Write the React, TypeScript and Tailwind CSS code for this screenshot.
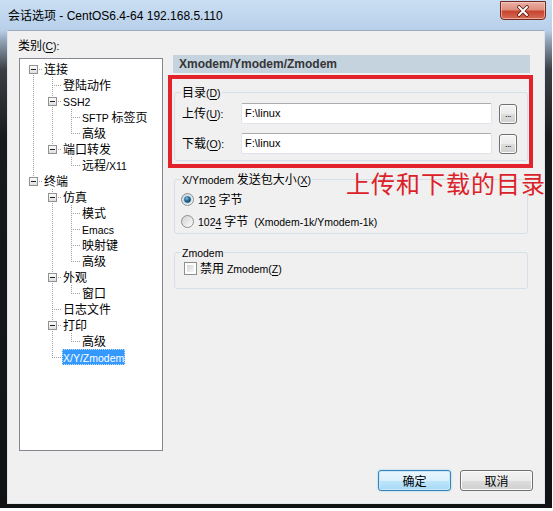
import React from "react";

const CJK_RE = /[\u2E80-\u9FFF\uFF00-\uFFEF\u3000-\u303F]/;

function Txt({ s, lat = "text-[10.5px]" }: { s: string; lat?: string }) {
  const toks: { ch: string; u: boolean }[] = [];
  for (let j = 0; j < s.length; j++) {
    if (s[j] === "&" && j + 1 < s.length) {
      toks.push({ ch: s[j + 1], u: true });
      j++;
    } else toks.push({ ch: s[j], u: false });
  }
  const runs: { t: string; c: boolean; u: boolean }[] = [];
  let cur: { t: string; c: boolean; u: boolean } | null = null;
  for (const t of toks) {
    const c = CJK_RE.test(t.ch);
    if (cur && cur.c === c && cur.u === t.u) cur.t += t.ch;
    else {
      cur = { t: t.ch, c, u: t.u };
      runs.push(cur);
    }
  }
  return (
    <>
      {runs.map((r, i) => (
        <span
          key={i}
          className={
            (r.c ? "text-[12px] [font-family:'Noto_Sans_CJK_SC',sans-serif]" : lat) +
            (r.u ? " underline underline-offset-[2px] decoration-1" : "")
          }
        >
          {r.t}
        </span>
      ))}
    </>
  );
}

type N = { l: string; c?: N[]; sel?: boolean };
const TREE: N[] = [
  {
    l: "连接",
    c: [
      { l: "登陆动作" },
      { l: "SSH2", c: [{ l: "SFTP 标签页" }, { l: "高级" }] },
      { l: "端口转发", c: [{ l: "远程/X11" }] },
    ],
  },
  {
    l: "终端",
    c: [
      { l: "仿真", c: [{ l: "模式" }, { l: "Emacs" }, { l: "映射键" }, { l: "高级" }] },
      { l: "外观", c: [{ l: "窗口" }] },
      { l: "日志文件" },
      { l: "打印", c: [{ l: "高级" }] },
      { l: "X/Y/Zmodem", sel: true },
    ],
  },
];

type Row = {
  l: string;
  depth: number;
  hasKids: boolean;
  last: boolean;
  firstRoot: boolean;
  anc: boolean[];
  sel?: boolean;
};

function flatten(nodes: N[], depth: number, anc: boolean[], out: Row[]) {
  nodes.forEach((n, i) => {
    const last = i === nodes.length - 1;
    out.push({
      l: n.l,
      depth,
      hasKids: !!n.c,
      last,
      firstRoot: depth === 0 && i === 0,
      anc,
      sel: n.sel,
    });
    if (n.c) flatten(n.c, depth + 1, [...anc, last], out);
  });
  return out;
}

const ROWS = flatten(TREE, 0, [], []);
const DOT = "#a0a0a0";

function dotsV(x: number, y0: number, y1: number, k: string) {
  const r: React.ReactNode[] = [];
  for (let y = y0; y <= y1; y += 2) r.push(<rect key={k + y} x={x} y={y} width={1} height={1} fill={DOT} />);
  return r;
}
function dotsH(y: number, x0: number, x1: number, k: string) {
  const r: React.ReactNode[] = [];
  for (let x = x0; x <= x1; x += 2) r.push(<rect key={k + x} x={x} y={y} width={1} height={1} fill={DOT} />);
  return r;
}

function AncCell({ line }: { line: boolean }) {
  return (
    <svg width={19} height={16} className="block shrink-0">
      {line && dotsV(9, 0, 15, "a")}
    </svg>
  );
}

function NodeCell({ row }: { row: Row }) {
  const up = !row.firstRoot;
  const down = !row.last;
  return (
    <svg width={19} height={16} className="block shrink-0">
      {row.hasKids ? (
        <>
          {up && dotsV(9, 0, 3, "u")}
          {down && dotsV(9, 14, 15, "d")}
          {dotsH(8, 15, 18, "h")}
          <defs>
            <linearGradient id="bx" x1="0" y1="0" x2="0" y2="1">
              <stop offset="0" stopColor="#ffffff" />
              <stop offset="1" stopColor="#dcdcdc" />
            </linearGradient>
          </defs>
          <rect x={5.5} y={4.5} width={8} height={8} fill="url(#bx)" stroke="#919191" />
          <rect x={7} y={8} width={5} height={1} fill="#222" />
        </>
      ) : (
        <>
          {up && dotsV(9, 0, 8, "u")}
          {down && dotsV(9, 10, 15, "d")}
          {dotsH(8, 11, 18, "h")}
        </>
      )}
    </svg>
  );
}

function Tree() {
  return (
    <div className="mt-[6px] w-[144px] h-[393px] border border-[#828790] bg-white pt-[2px] pl-[4px] overflow-hidden">
      {ROWS.map((r, i) => (
        <div key={i} className="flex h-[16px] items-center">
          {r.anc.map((last, j) => (
            <AncCell key={j} line={!last} />
          ))}
          <NodeCell row={r} />
          <span
            className={
              "h-[16px] leading-[16px] px-[1px] whitespace-pre " +
              (r.sel
                ? "bg-[#3399ff] text-white outline outline-1 outline-dotted outline-[#c8dcf2] -outline-offset-1"
                : "text-black")
            }
          >
            <Txt s={r.l} />
          </span>
        </div>
      ))}
    </div>
  );
}

function Radio({ checked, id }: { checked: boolean; id: string }) {
  return (
    <svg width={13} height={13} viewBox="0 0 13 13" className="block shrink-0">
      <defs>
        <linearGradient id={id + "o"} x1="0" y1="0" x2="1" y2="1">
          <stop offset="0" stopColor="#cfcfcf" />
          <stop offset="1" stopColor="#ffffff" />
        </linearGradient>
        <radialGradient id={id + "i"} cx="0.4" cy="0.35" r="0.75">
          <stop offset="0" stopColor="#7fc8ee" />
          <stop offset="0.45" stopColor="#2d6a8e" />
          <stop offset="1" stopColor="#163a50" />
        </radialGradient>
      </defs>
      <circle cx={6.5} cy={6.5} r={6} fill={`url(#${id}o)`} stroke="#8e8f8f" />
      {checked && <circle cx={6.5} cy={6.5} r={4.5} fill="#bfe2f6" />}
      {checked && <circle cx={6.5} cy={6.5} r={3.3} fill={`url(#${id}i)`} />}
    </svg>
  );
}

function Check() {
  return (
    <div className="w-[13px] h-[13px] border border-[#8e8f8f] bg-white p-[2px] shrink-0">
      <div className="w-full h-full bg-[linear-gradient(135deg,#d6d6d6_0%,#f7f7f7_100%)]" />
    </div>
  );
}

function PathRow({ label, mt }: { label: string; mt: string }) {
  return (
    <div className={"flex items-center h-[21px] " + mt}>
      <div className="w-[60px] pl-[1px] whitespace-pre leading-[14px]">
        <Txt s={label} />
      </div>
      <div className="w-[251px] h-[21px] bg-white border border-[#e2e3ea] border-t-[#abadb3] rounded-[2px] pl-[3px] text-[11px] leading-[19px]">
        F:\linux
      </div>
      <div className="ml-[7px] w-[18px] h-[20px] rounded-[3px] border border-[#707070] bg-[linear-gradient(to_bottom,#f4f4f4_0%,#ebebeb_50%,#dddddd_50%,#cfcfcf_100%)] shadow-[inset_0_0_0_1px_#fcfcfc] flex items-end justify-center pb-[4px] text-[9px] leading-[9px] tracking-[-0.5px]">
        ...
      </div>
    </div>
  );
}

export default function App() {
  return (
    <div className="relative w-[553px] h-[511px] bg-white overflow-hidden [font-family:'Liberation_Sans','Noto_Sans_CJK_SC',sans-serif] text-black">
      <div className="w-[552px] h-[508px] flex flex-col bg-[linear-gradient(to_bottom,#cadef3_0px,#b8d0ea_30px,#8e9eb1_42px,#3b3e43_70px,#17191b_140px,#111213_100%)]">
        {/* title bar */}
        <div className="h-[30px] shrink-0 flex items-start">
          <div className="ml-[8px] mt-[7px] h-[16px] leading-[16px] whitespace-pre text-black">
            <Txt s="会话选项 - CentOS6.4-64 192.168.5.110" lat="text-[12px]" />
          </div>
          <div className="ml-auto mr-[6px] mt-[1px] w-[46px] h-[19px] rounded-b-[4px] border border-[#6e2b22] bg-[linear-gradient(to_bottom,#eab1a4_0%,#de8f7f_45%,#c8442f_55%,#d56c55_100%)] shadow-[inset_0_0_0_1px_rgba(255,210,200,0.6)] flex items-center justify-center">
            <svg width={14} height={12} viewBox="0 0 14 12">
              <path d="M3 2 L11 10 M11 2 L3 10" stroke="#5a1a12" strokeWidth={3.6} strokeLinecap="round" />
              <path d="M3 2 L11 10 M11 2 L3 10" stroke="#ffffff" strokeWidth={2} strokeLinecap="round" />
            </svg>
          </div>
        </div>

        {/* content */}
        <div className="mx-[7px] h-[474px] bg-[#f0f0f0] border border-[#dfe5eb] border-t-[#9aa9ba] flex flex-col">
          <div className="flex">
            {/* left */}
            <div className="pl-[11px] pt-[7px] flex flex-col">
              <div className="-ml-[1px] h-[14px] leading-[14px] whitespace-pre">
                <Txt s="类别(&C):" />
              </div>
              <Tree />
            </div>

            {/* right */}
            <div className="ml-[10px] w-[357px] pt-[24px] flex flex-col">
              <div className="h-[18px] bg-[#c5d3df] pl-[6px] font-bold text-[12px] leading-[18px] text-[#363636]">
                Xmodem/Ymodem/Zmodem
              </div>

              <div className="mt-[2px] -ml-[5px] -mr-[3px] h-[93px] border-[4px] border-[#e3232c] pl-[2px] pt-[6px]">
                <fieldset className="w-[354px] border border-[#d5dfe5] rounded-[3px] pl-[6px] pt-[4px] pb-[6px]">
                  <legend className="px-[1px] h-[14px] leading-[14px] whitespace-pre">
                    <Txt s="目录(&D)" />
                  </legend>
                  <PathRow label="上传(&U):" mt="" />
                  <PathRow label="下载(&O):" mt="mt-[9px]" />
                </fieldset>
              </div>

              <fieldset className="mt-[4px] ml-[1px] w-[354px] border border-[#d5dfe5] rounded-[3px] pl-[6px] pt-[5px] pb-[4px]">
                <legend className="px-[1px] h-[14px] leading-[14px] whitespace-pre">
                  <Txt s="X/Ymodem 发送包大小(&X)" />
                </legend>
                <div className="flex items-center h-[16px]">
                  <Radio checked id="r1" />
                  <span className="ml-[4px] whitespace-pre leading-[16px]">
                    <Txt s="12&8 字节" />
                  </span>
                </div>
                <div className="flex items-center h-[16px] mt-[6px]">
                  <Radio checked={false} id="r2" />
                  <span className="ml-[4px] whitespace-pre leading-[16px]">
                    <Txt s="102&4 字节  (Xmodem-1k/Ymodem-1k)" />
                  </span>
                </div>
              </fieldset>

              <fieldset className="mt-[11px] ml-[1px] w-[354px] border border-[#d5dfe5] rounded-[3px] pl-[6px] pt-[1px] pb-[12px]">
                <legend className="px-[1px] h-[14px] leading-[14px] whitespace-pre">
                  <Txt s="Zmodem" />
                </legend>
                <div className="flex items-center h-[16px]">
                  <div className="ml-[3px]">
                    <Check />
                  </div>
                  <span className="ml-[3px] whitespace-pre leading-[16px]">
                    <Txt s="禁用 Zmodem(&Z)" />
                  </span>
                </div>
              </fieldset>
            </div>
          </div>

          {/* buttons */}
          <div className="mt-auto flex justify-end gap-[9px] pr-[11px] pb-[12px]">
            <div className="w-[73px] h-[21px] rounded-[3px] border border-[#3c7fb1] bg-[linear-gradient(to_bottom,#eaf6fd_0%,#d9f0fc_50%,#bee6fd_50%,#a7d9f5_100%)] shadow-[inset_0_0_0_1px_#c6eafc,0_0_2px_#7fd0f6] flex items-center justify-center leading-[14px]">
              <Txt s="确定" />
            </div>
            <div className="w-[73px] h-[21px] rounded-[3px] border border-[#707070] bg-[linear-gradient(to_bottom,#f2f2f2_0%,#ebebeb_50%,#dddddd_50%,#cfcfcf_100%)] shadow-[inset_0_0_0_1px_#fbfbfb] flex items-center justify-center leading-[14px]">
              <Txt s="取消" />
            </div>
          </div>
        </div>
      </div>

      {/* annotation overlay */}
      <div className="absolute left-[346px] top-[171px] text-[24px] leading-[24px] tracking-[1px] text-[#dc2229] whitespace-nowrap [font-family:'Noto_Sans_CJK_SC',sans-serif]">
        上传和下载的目录
      </div>
    </div>
  );
}
